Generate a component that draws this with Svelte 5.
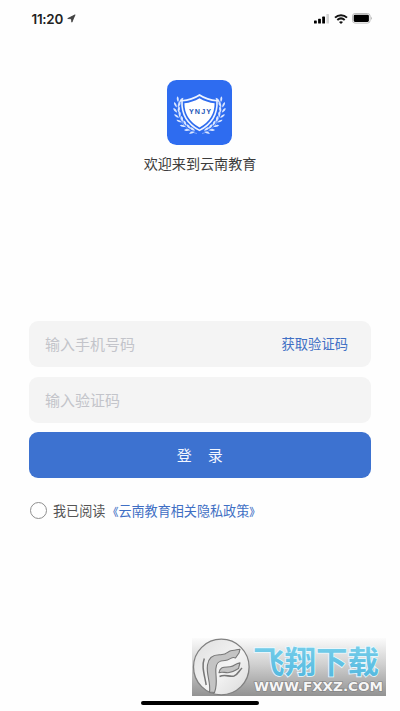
<script lang="ts">
  let phone: string = $state('');
  let code: string = $state('');
  let agreed: boolean = $state(false);

  // Laurel leaves, listed from the bottom of the branch to its tip
  const leaves = [
    { x: 27, y: 51, r: 12 },
    { x: 22.5, y: 49, r: 28 },
    { x: 18.3, y: 45.6, r: 42 },
    { x: 14.8, y: 41.4, r: 54 },
    { x: 12.1, y: 36.7, r: 65 },
    { x: 10.6, y: 31.6, r: 78 },
    { x: 10.4, y: 26.5, r: 92 },
    { x: 12, y: 21.5, r: 112 }
  ];
</script>

<div class="screen">
  <header class="status">
    <div class="status__time">
      <span>11:20</span>
      <svg width="9" height="9" viewBox="0 0 10 10">
        <path d="M.8 5 9 .9 5.4 9.1 4.9 5.3Z" fill="#444" stroke="#333" stroke-width=".8" stroke-linejoin="round" />
      </svg>
    </div>
    <div class="status__icons">
      <svg width="16" height="10" viewBox="0 0 16 10">
        <rect x="0" y="6.4" width="2.8" height="3.1" rx=".6" />
        <rect x="4.1" y="4.8" width="2.8" height="4.7" rx=".6" />
        <rect x="8.2" y="2.6" width="2.8" height="6.9" rx=".6" />
        <rect x="12.4" y="0" width="2.6" height="9.5" rx=".6" fill="#d4d4d4" />
      </svg>
      <svg width="14" height="10" viewBox="0 0 14 10" fill="none" stroke="#111" stroke-width="2">
        <path d="M1 3.6C4.4.3 9.6.3 13 3.6" />
        <path d="M3.3 6.1C5.5 4.1 8.5 4.1 10.7 6.1" />
        <path d="M7 9.9 5 7.9Q7 6.5 9 7.9Z" fill="#111" stroke="none" />
      </svg>
      <svg width="21" height="11" viewBox="0 0 21 11">
        <rect x=".5" y=".5" width="17.6" height="9.6" rx="2.6" fill="#fff" stroke="#bbb" />
        <rect x="1.7" y="1.7" width="15.2" height="7.2" rx="1.3" />
        <path d="M19.3 3.6Q20.8 5.3 19.3 7Z" fill="#999" />
      </svg>
    </div>
  </header>

  <section class="brand">
    <svg class="brand__logo" width="65" height="65" viewBox="0 0 65 65">
      <rect width="65" height="65" rx="9.5" fill="#2e6cf0" />
      {#each [1, -1] as side}
        <g transform={side === 1 ? '' : 'translate(65 0) scale(-1 1)'} fill="#dce7ff">
          <path d="M30 53.5C18 51 10.5 40 11.5 22" fill="none" stroke="#a9c5ff" stroke-width=".6" />
          {#each leaves as leaf}
            <g transform="translate({leaf.x} {leaf.y}) rotate({leaf.r})">
              <path d="M1 -.4Q-2 -4.2 -5 -2.6Q-3 .2 1 -.4Z" />
              <path d="M1 .6Q-1.6 4.2 -4.4 3.4Q-3 .4 1 .6Z" />
            </g>
          {/each}
        </g>
      {/each}
      <path d="M32.5 15Q40 20 50 20.8Q51 41 32.5 50.4Q14 41 15 20.8Q25 20 32.5 15Z" fill="#2e6cf0" stroke="#eef4ff" stroke-width="1.6" />
      <path d="M32.5 18.2Q39.5 22.4 47.6 23.2Q47.6 39.2 32.5 47.4Q17.4 39.2 17.4 23.2Q25.5 22.4 32.5 18.2Z" fill="#fff" />
      <text class="brand__mark" x="33" y="33.6" text-anchor="middle" textLength="22">YNJY</text>
    </svg>
    <h1 class="brand__title">欢迎来到云南教育</h1>
  </section>

  <form class="login" onsubmit={(e) => e.preventDefault()}>
    <div class="field">
      <input class="field__input" type="tel" placeholder="输入手机号码" bind:value={phone} />
      <button class="field__action" type="button">获取验证码</button>
    </div>
    <div class="field">
      <input class="field__input" type="text" placeholder="输入验证码" bind:value={code} />
    </div>
    <button class="submit" type="submit"><span>登</span><span>录</span></button>
    <label class="agree">
      <input class="agree__check" type="checkbox" bind:checked={agreed} />
      <span>我已阅读</span>
      <span class="agree__link"><span class="agree__mark agree__mark--open">《</span>云南教育相关隐私政策<span class="agree__mark">》</span></span>
    </label>
  </form>

  <div class="home-bar"></div>

  <svg class="watermark" width="194" height="58" viewBox="0 0 194 58">
    <defs>
      <linearGradient id="wm-back" x1="0" y1="0" x2="0" y2="1">
        <stop offset="0" stop-color="#fbfbfb" />
        <stop offset=".45" stop-color="#d0d0d0" />
        <stop offset="1" stop-color="#929292" />
      </linearGradient>
      <linearGradient id="wm-disc" x1="0" y1="0" x2="1" y2="1">
        <stop offset="0" stop-color="#dedede" />
        <stop offset=".55" stop-color="#f4f4f4" />
        <stop offset="1" stop-color="#d8d8d8" />
      </linearGradient>
      <linearGradient id="wm-text" x1="0" y1="0" x2="0" y2="1">
        <stop offset="0" stop-color="#7fd3ec" />
        <stop offset="1" stop-color="#4fb6de" />
      </linearGradient>
    </defs>
    <rect width="194" height="58" fill="url(#wm-back)" />
    <circle cx="29.3" cy="29" r="27.8" fill="url(#wm-disc)" stroke="#808080" stroke-width="1.3" />
    <g fill="#c4c4c4" stroke="#777" stroke-width="1.1" stroke-linejoin="round">
      <path d="M17.5 54C19 45 14 36 15.5 27C16.5 19 21 16.5 28 16.7C37 17 35 12.5 40 12.5C44 12.6 45 11 48 11.2L47 15L43.5 20C40 17.5 38 22.5 33 22.5C26 22.5 24 25.5 23.8 31C23.5 38 26 46 22.5 54.5Z" />
      <path d="M12.3 20.5C9.5 28 12 35 14.2 47" fill="none" stroke-width="1.5" />
      <path d="M27 34.7C28 28 33 29.3 38 28.8C43 28.2 43 25.5 48 24.8L46.5 30.5C43 32.5 41 34.7 36 34.7C32 34.7 30 33.5 27 34.7Z" />
      <path d="M27.5 38.5C33 36 37 39 42 38C46 37 46.5 33 50 30" fill="none" stroke-width="1.6" />
    </g>
    <text class="watermark__name" x="61" y="34.6" textLength="126" lengthAdjust="spacingAndGlyphs">飞翔下载</text>
    <text class="watermark__url" x="62" y="53.3" textLength="129" lengthAdjust="spacingAndGlyphs">WWW.FXXZ.COM</text>
  </svg>
</div>

<style>
  :global(body) {
    margin: 0;
    background: #fefefe;
  }

  .screen {
    position: relative;
    display: flex;
    flex-direction: column;
    box-sizing: border-box;
    height: 711px;
    overflow: hidden;
    background: #fefefe;
    font-family: 'Noto Sans CJK SC', sans-serif;
    color: #444;
  }

  .status {
    display: flex;
    justify-content: space-between;
    align-items: center;
    height: 37px;
    padding: 0 27.5px 0 31.5px;
  }

  .status__time {
    display: flex;
    align-items: center;
    gap: 4px;
    font: 600 13.4px/16px Inter, sans-serif;
    letter-spacing: -0.25px;
    color: #222;
  }

  .status__icons {
    display: flex;
    align-items: center;
    gap: 4px;
  }

  .brand {
    display: flex;
    flex-direction: column;
    align-items: center;
    padding-top: 43px;
  }

  .brand__logo {
    margin-right: 1px;
  }

  .brand__mark {
    font: 700 7.2px 'Liberation Sans', sans-serif;
    fill: #2456b8;
  }

  .brand__title {
    margin: 8px 0 0;
    font-size: 14.1px;
    font-weight: 400;
    line-height: 20px;
    color: #3c3c3c;
  }

  .login {
    display: flex;
    flex-direction: column;
    gap: 9.5px;
    margin: 148px 29.5px 0 29px;
  }

  .field {
    display: flex;
    align-items: center;
    box-sizing: border-box;
    height: 46px;
    padding: 0 22.5px 1px 16px;
    border-radius: 9px;
    background: #f4f4f4;
  }

  .field__input {
    flex: 1;
    min-width: 0;
    padding: 0;
    border: 0;
    outline: 0;
    background: none;
    font: 400 15px 'Noto Sans CJK SC', sans-serif;
    color: #444;
  }

  .field__input::placeholder {
    color: #c3c4ca;
    opacity: 1;
  }

  .field__action {
    padding: 0;
    border: 0;
    background: none;
    font: 400 13.3px 'Noto Sans CJK SC', sans-serif;
    color: #406fc4;
  }

  .submit {
    display: flex;
    justify-content: center;
    align-items: center;
    gap: 16px;
    height: 46px;
    padding: 0 0 1px;
    border: 0;
    border-radius: 9px;
    background: #3d72d0;
    font: 400 15px 'Noto Sans CJK SC', sans-serif;
    color: #f3f7ff;
  }

  .agree {
    display: flex;
    align-items: center;
    height: 20px;
    margin-top: 13px;
    font-size: 13.1px;
    color: #555;
  }

  .agree__check {
    appearance: none;
    box-sizing: border-box;
    width: 17px;
    height: 17px;
    margin: 0 6px 0 1px;
    border: 1.5px solid #8e8e8e;
    border-radius: 50%;
  }

  .agree__check:checked {
    background: #3d72d0;
  }

  .agree__link {
    color: #406fc4;
  }

  .agree__mark {
    display: inline-block;
    width: 13px;
    font-size: 11px;
    font-weight: 500;
    line-height: 1;
  }

  .agree__mark--open {
    text-align: right;
  }

  .home-bar {
    width: 118px;
    height: 4px;
    margin: auto auto 6px;
    border-radius: 2px;
    background: #000;
  }

  /* Stamp laid over the bottom corner */
  .watermark {
    position: absolute;
    right: 14px;
    bottom: 15px;
  }

  .watermark__name {
    font: 700 31px 'Noto Sans CJK SC', sans-serif;
    fill: url(#wm-text);
    stroke: #e9f9ff;
    stroke-width: 1.6px;
    paint-order: stroke;
  }

  .watermark__url {
    font: 700 12px 'DejaVu Sans', sans-serif;
    fill: #f6f6f6;
    stroke: #808080;
    stroke-width: 1.2px;
    paint-order: stroke;
  }
</style>
